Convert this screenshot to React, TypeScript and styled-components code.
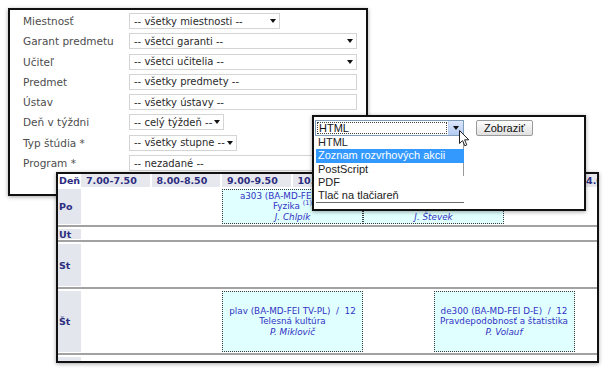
import React from 'react';
import styled, { createGlobalStyle } from 'styled-components';

const GlobalStyle = createGlobalStyle`
  body {
    margin: 0;
    background: #fff;
  }
`;

const Canvas = styled.div`
  position: relative;
  width: 608px;
  height: 374px;
  box-sizing: border-box;
  padding: 8px;
  overflow: hidden;
  background: #fff;
`;

// ---- filter form ----

const FormPanel = styled.div`
  width: 360px;
  height: 188px;
  box-sizing: border-box;
  border: 2px solid #111;
  background: #fff;
  box-shadow: 0 1px 4px rgba(0, 0, 0, 0.35);
  padding: 3px 9px 0 13px;
  display: grid;
  grid-template-columns: 106px 1fr;
  grid-auto-rows: 16px;
  row-gap: 4.3px;
  align-items: center;
  font-family: "DejaVu Sans", Verdana, sans-serif;
`;

const Label = styled.div`
  font-size: 10.5px;
  color: #4d4d4d;
  white-space: nowrap;
`;

const Field = styled.div<{ $w?: number }>`
  width: ${p => (p.$w ? `${p.$w}px` : '100%')};
  height: 16px;
  box-sizing: border-box;
  border: 1px solid #d4d4d4;
  background: #fff;
  display: flex;
  align-items: center;
  justify-content: space-between;
  padding: 0 3px 0 4px;
  font-size: 10px;
  color: #2a2a2a;
  white-space: nowrap;
`;

const Caret = styled.span`
  width: 0;
  height: 0;
  border-left: 3px solid transparent;
  border-right: 3px solid transparent;
  border-top: 4px solid #111;
`;

// ---- timetable ----

const Timetable = styled.div`
  position: absolute;
  left: 56px;
  top: 172px;
  width: 543px;
  height: 191px;
  box-sizing: border-box;
  border: 2px solid #111;
  background: #fff;
  overflow: hidden;
  box-shadow: 0 1px 4px rgba(0, 0, 0, 0.35);
  font-family: "DejaVu Sans", Verdana, sans-serif;
`;

const Grid = styled.div<{ $h: number }>`
  display: grid;
  grid-template-columns: 23px repeat(8, 70.5px);
  grid-template-rows: ${p => p.$h}px;
  width: 587px;
`;

const HeadRow = styled(Grid)`
  margin-bottom: 1px;
`;

const HeadCell = styled.div<{ $first?: boolean }>`
  margin-right: 2px;
  padding-left: ${p => (p.$first ? 1 : 5)}px;
  background: ${p => (p.$first ? 'transparent' : '#e6e8ee')};
  font-size: 9.5px;
  font-weight: bold;
  color: #2c2c80;
  line-height: 13px;
  white-space: nowrap;
`;

const DayRow = styled(Grid)`
  border-bottom: 2px solid #a2a2a2;
  margin-bottom: 1px;
`;

const DayCell = styled.div`
  grid-row: 1;
  grid-column: 1;
  margin: 1px 0;
  padding-left: 1px;
  background: #e3e6ec;
  display: flex;
  align-items: center;
  font-size: 9.5px;
  font-weight: bold;
  color: #2c2c80;
`;

const Event = styled.div<{ $col: number }>`
  grid-row: 1;
  grid-column: ${p => p.$col} / span 2;
  margin: 1px 0;
  box-sizing: border-box;
  background: #e0ffff;
  border: 1px dotted #3a3a3a;
  display: flex;
  flex-direction: column;
  justify-content: center;
  align-items: center;
  overflow: hidden;
  font-size: 8.8px;
  line-height: 10.5px;
  color: #3232c4;
  white-space: nowrap;
  text-align: center;
`;

const Teacher = styled.i``;

const Sup = styled.sup`
  font-size: 6.5px;
  line-height: 0;
`;

// ---- export panel ----

const ExportPanel = styled.div`
  position: absolute;
  left: 312px;
  top: 115px;
  width: 274px;
  height: 96px;
  box-sizing: border-box;
  border: 2px solid #111;
  background: #fff;
  box-shadow: 0 1px 4px rgba(0, 0, 0, 0.35);
  padding: 3px 0 0 1px;
  font-family: "Liberation Sans", Arial, sans-serif;
  font-size: 11px;
  color: #111;
`;

const ExportRow = styled.div`
  display: flex;
  align-items: flex-start;
  gap: 12px;
`;

const Combo = styled.div`
  display: flex;
  flex-direction: column;
  width: 149px;
`;

const SelectBox = styled.div`
  height: 16px;
  box-sizing: border-box;
  border: 1px solid #7f9db9;
  display: flex;
`;

const SelectValue = styled.div`
  flex: 1;
  margin: 1px;
  border: 1px dotted #444;
  padding-left: 1px;
  line-height: 11px;
`;

const ArrowBtn = styled.div`
  width: 14px;
  background: linear-gradient(#dce8fc, #b4cbf3);
  border-left: 1px solid #bcd0f4;
  display: flex;
  align-items: center;
  justify-content: center;
`;

const OptionList = styled.div`
  margin-left: 1px;
  border-bottom: 1px solid #6a6a6a;
`;

const Option = styled.div<{ $active?: boolean; $edge?: boolean }>`
  height: 13.3px;
  line-height: 13.3px;
  padding-left: 2px;
  background: ${p => (p.$active ? '#3399ff' : 'transparent')};
  color: ${p => (p.$active ? '#fff' : '#222')};
  border-right: 1px solid ${p => (p.$edge ? '#9a9a9a' : 'transparent')};
  white-space: nowrap;
`;

const Button = styled.div`
  height: 16px;
  box-sizing: border-box;
  padding: 0 7px;
  border: 1px solid #9a9a9a;
  border-radius: 2px;
  background: linear-gradient(#fdfdfd, #e0e0e0);
  line-height: 14px;
  color: #111;
`;

const Pointer = styled.svg`
  position: absolute;
  left: 145px;
  top: 13px;
`;

const heads = ['7.00-7.50', '8.00-8.50', '9.00-9.50', '10.00-10.50', '11.00-11.50', '12.00-12.50', '13.00-13.50', '14.00-14.50'];

function App() {
  return (
    <Canvas>
      <GlobalStyle />
      <FormPanel>
        <Label>Miestnosť</Label>
        <Field $w={151}>-- všetky miestnosti --<Caret /></Field>
        <Label>Garant predmetu</Label>
        <Field>-- všetci garanti --<Caret /></Field>
        <Label>Učiteľ</Label>
        <Field>-- všetci učitelia --<Caret /></Field>
        <Label>Predmet</Label>
        <Field>-- všetky predmety --</Field>
        <Label>Ústav</Label>
        <Field>-- všetky ústavy --</Field>
        <Label>Deň v týždni</Label>
        <Field $w={95}>-- celý týždeň --<Caret /></Field>
        <Label>Typ štúdia *</Label>
        <Field $w={108}>-- všetky stupne --<Caret /></Field>
        <Label>Program *</Label>
        <Field>-- nezadané --</Field>
      </FormPanel>

      <Timetable>
        <HeadRow $h={13}>
          <HeadCell $first>Deň</HeadCell>
          {heads.map(h => <HeadCell key={h}>{h}</HeadCell>)}
        </HeadRow>
        <DayRow $h={37}>
          <DayCell>Po</DayCell>
          <Event $col={4}>
            <span>a303 (BA-MD-FEI F) / 12</span>
            <span>Fyzika <Sup>(1)</Sup></span>
            <Teacher>J. Chlpík</Teacher>
          </Event>
          <Event $col={6}>
            <span>c111 (BA-MD-FEI E) / 12</span>
            <span>Chémia</span>
            <Teacher>J. Števek</Teacher>
          </Event>
        </DayRow>
        <DayRow $h={12}>
          <DayCell>Ut</DayCell>
        </DayRow>
        <DayRow $h={44}>
          <DayCell>St</DayCell>
        </DayRow>
        <DayRow $h={63}>
          <DayCell>Št</DayCell>
          <Event $col={4}>
            <span>plav (BA-MD-FEI TV-PL)&nbsp; / &nbsp;12</span>
            <span>Telesná kultúra</span>
            <Teacher>P. Miklovič</Teacher>
          </Event>
          <Event $col={7}>
            <span>de300 (BA-MD-FEI D-E)&nbsp; / &nbsp;12</span>
            <span>Pravdepodobnosť a štatistika</span>
            <Teacher>P. Volauf</Teacher>
          </Event>
        </DayRow>
        <DayRow $h={20}>
          <DayCell>Pia</DayCell>
        </DayRow>
      </Timetable>

      <ExportPanel>
        <ExportRow>
          <Combo>
            <SelectBox>
              <SelectValue>HTML</SelectValue>
              <ArrowBtn>
                <Caret />
              </ArrowBtn>
            </SelectBox>
            <OptionList>
              <Option $edge>HTML</Option>
              <Option $active>Zoznam rozvrhových akcii</Option>
              <Option $edge>PostScript</Option>
              <Option>PDF</Option>
              <Option>Tlač na tlačiareň</Option>
            </OptionList>
          </Combo>
          <Button>Zobraziť</Button>
        </ExportRow>
        <Pointer width="11" height="17" viewBox="0 0 11 17">
          <path d="M0.5 0.5 L0.5 13.5 L3.6 10.6 L5.8 15.8 L7.8 14.9 L5.6 9.8 L9.8 9.8 Z" fill="#fff" stroke="#222" strokeWidth="1" strokeLinejoin="round" />
        </Pointer>
      </ExportPanel>
    </Canvas>
  );
}

export default App;
